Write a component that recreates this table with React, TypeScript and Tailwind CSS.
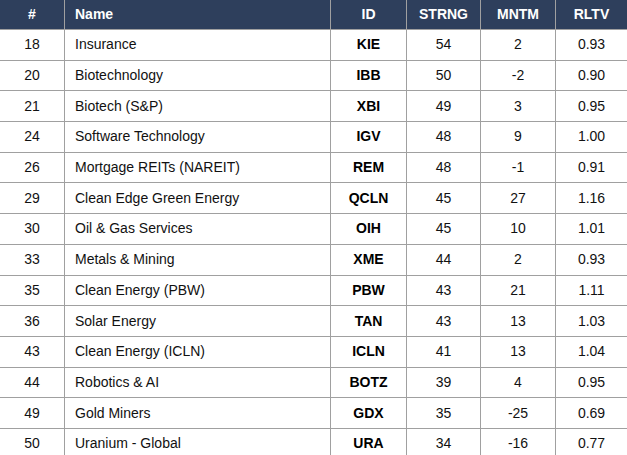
const rows = [
  { rank: 18, name: 'Insurance', id: 'KIE', strng: 54, mntm: 2, rltv: '0.93' },
  { rank: 20, name: 'Biotechnology', id: 'IBB', strng: 50, mntm: -2, rltv: '0.90' },
  { rank: 21, name: 'Biotech (S&P)', id: 'XBI', strng: 49, mntm: 3, rltv: '0.95' },
  { rank: 24, name: 'Software Technology', id: 'IGV', strng: 48, mntm: 9, rltv: '1.00' },
  { rank: 26, name: 'Mortgage REITs (NAREIT)', id: 'REM', strng: 48, mntm: -1, rltv: '0.91' },
  { rank: 29, name: 'Clean Edge Green Energy', id: 'QCLN', strng: 45, mntm: 27, rltv: '1.16' },
  { rank: 30, name: 'Oil & Gas Services', id: 'OIH', strng: 45, mntm: 10, rltv: '1.01' },
  { rank: 33, name: 'Metals & Mining', id: 'XME', strng: 44, mntm: 2, rltv: '0.93' },
  { rank: 35, name: 'Clean Energy (PBW)', id: 'PBW', strng: 43, mntm: 21, rltv: '1.11' },
  { rank: 36, name: 'Solar Energy', id: 'TAN', strng: 43, mntm: 13, rltv: '1.03' },
  { rank: 43, name: 'Clean Energy (ICLN)', id: 'ICLN', strng: 41, mntm: 13, rltv: '1.04' },
  { rank: 44, name: 'Robotics & AI', id: 'BOTZ', strng: 39, mntm: 4, rltv: '0.95' },
  { rank: 49, name: 'Gold Miners', id: 'GDX', strng: 35, mntm: -25, rltv: '0.69' },
  { rank: 50, name: 'Uranium - Global', id: 'URA', strng: 34, mntm: -16, rltv: '0.77' },
];

const grid = 'grid grid-cols-[65px_266px_76px_74px_75px_1fr]';
const cell = 'flex items-center justify-center border-r border-[#a0a0a0]';

export default function App() {
  return (
    <div className="w-[627px] h-[455px] overflow-hidden bg-white font-['Liberation_Sans',Arial,sans-serif] text-[14px] text-[#111]">
      {/* Header */}
      <div className={`${grid} h-[30px] bg-[#2e3f5c] border-b border-[#a0a0a0] font-bold text-white`}>
        <div className={cell}>#</div>
        <div className={`${cell} !justify-start pl-[10px]`}>Name</div>
        <div className={cell}>ID</div>
        <div className={cell}>STRNG</div>
        <div className={cell}>MNTM</div>
        <div className="flex items-center justify-center">RLTV</div>
      </div>

      {rows.map((r) => (
        <div key={r.id} className={`${grid} h-[30.7px] border-b border-[#a0a0a0]`}>
          <div className={cell}>{r.rank}</div>
          <div className={`${cell} !justify-start pl-[10px]`}>{r.name}</div>
          <div className={`${cell} font-bold text-black`}>{r.id}</div>
          <div className={cell}>{r.strng}</div>
          <div className={cell}>{r.mntm}</div>
          <div className="flex items-center justify-center">{r.rltv}</div>
        </div>
      ))}
    </div>
  );
}
